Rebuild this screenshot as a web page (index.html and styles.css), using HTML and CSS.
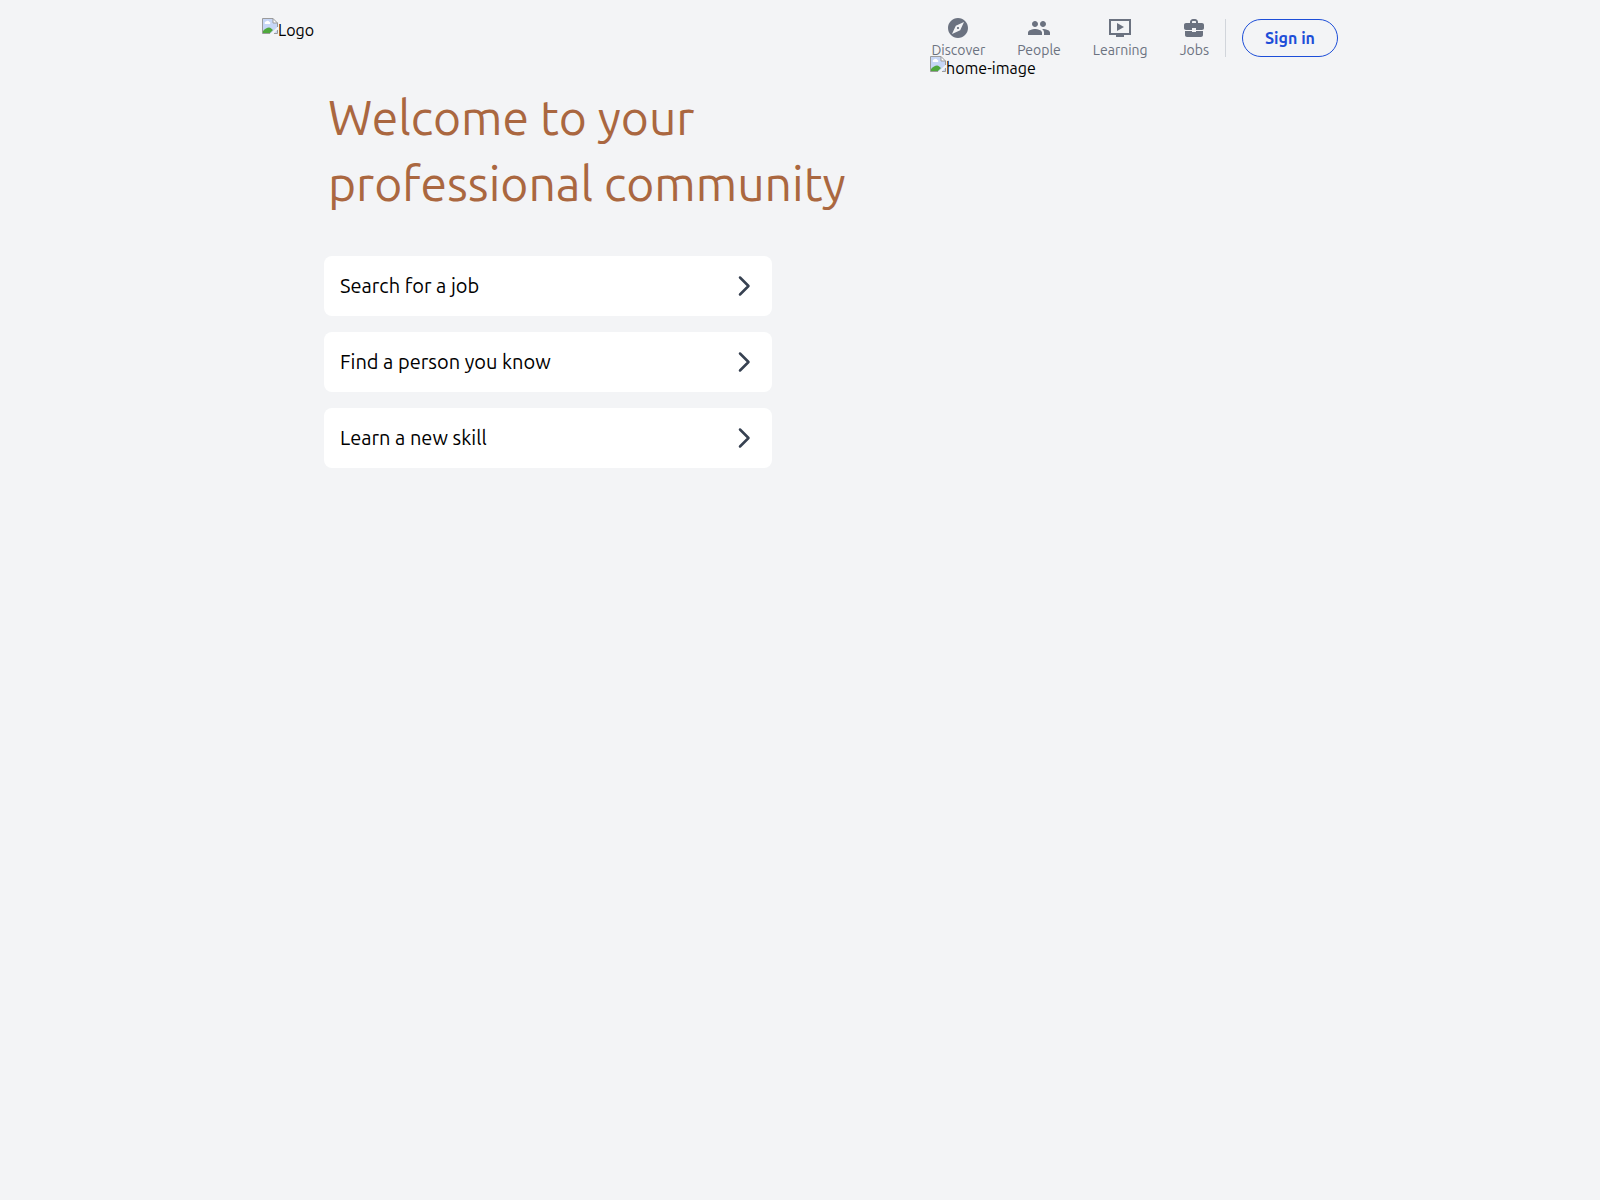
FILE: index.html
```html
<!DOCTYPE html>
<html lang="en">

<head>
    <meta charset="UTF-8">
    <meta name="viewport" content="width=device-width, initial-scale=1.0">
    <title>Welcome to your professional community</title>
    <link rel="stylesheet" href="styles.css">
</head>

<body>

    <!-- missing picture icon, used by the logo and the home image -->
    <svg class="sprite" aria-hidden="true">
        <symbol id="broken" viewBox="0 0 16 16">
            <path d="M0.5 0.5H11L15.5 5V15.5H0.5Z" fill="#c6d6f6" />
            <path d="M1 15V13C3 11 5 9.5 7 9.5C8.5 9.5 10 11 11 12L8 15Z" fill="#4fa83d" />
            <path d="M3 6a1.5 1.5 0 0 1 1-2.5a2 2 0 0 1 3.5 .5a1.2 1.2 0 0 1 .5 2Z" fill="#fff" />
            <path d="M8 16L16 8.5V11L11.5 16Z" fill="#f3f4f6" />
            <path d="M11 .5V5H15.5Z" fill="#fff" />
            <path d="M8 15.5H.5V.5H11L15.5 5V9M11 .5V5H15.5M15.5 12V15.5H12" fill="none" stroke="#9b9b9b" />
        </symbol>
    </svg>

    <div class="container">
        <header class="header">
            <a class="picture logo" href="#">
                <svg class="picture-icon" aria-hidden="true"><use href="#broken" /></svg>
                <span>Logo</span>
            </a>

            <nav class="nav">
                <a class="nav-item" href="#">
                    <svg viewBox="0 0 24 24" aria-hidden="true">
                        <path d="M12 10.9c-.61 0-1.1.49-1.1 1.1s.49 1.1 1.1 1.1c.61 0 1.1-.49 1.1-1.1s-.49-1.1-1.1-1.1zM12 2C6.48 2 2 6.48 2 12s4.48 10 10 10 10-4.48 10-10S17.52 2 12 2zm2.19 12.19L6 18l3.81-8.19L18 6l-3.81 8.19z" />
                    </svg>
                    <span>Discover</span>
                </a>
                <a class="nav-item" href="#">
                    <svg viewBox="0 0 24 24" aria-hidden="true">
                        <path d="M16 11c1.66 0 2.99-1.34 2.99-3S17.66 5 16 5c-1.66 0-3 1.34-3 3s1.34 3 3 3zm-8 0c1.66 0 2.99-1.34 2.99-3S9.66 5 8 5C6.34 5 5 6.34 5 8s1.34 3 3 3zm0 2c-2.33 0-7 1.17-7 3.5V19h14v-2.5c0-2.33-4.67-3.5-7-3.5zm8 0c-.29 0-.62.02-.97.05 1.16.84 1.97 1.97 1.97 3.45V19h6v-2.5c0-2.33-4.67-3.5-7-3.5z" />
                    </svg>
                    <span>People</span>
                </a>
                <a class="nav-item" href="#">
                    <svg viewBox="0 0 24 24" aria-hidden="true">
                        <path d="M23 3H1v16h7v2h8v-2h7V3zm-2 14H3V5h18v12zm-5-6l-7 4V7z" />
                    </svg>
                    <span>Learning</span>
                </a>
                <a class="nav-item" href="#">
                    <svg viewBox="0 0 24 24" aria-hidden="true">
                        <path d="M10 16v-1H3v4c0 1.11.89 2 2 2h14c1.11 0 2-.89 2-2v-4h-7v1h-4zm10-9h-4V6c0-1.66-1.34-3-3-3h-2C9.34 3 8 4.34 8 6v1H4c-1.1 0-2 .9-2 2v3c0 1.11.89 2 2 2h6v-2h4v2h6c1.1 0 2-.9 2-2V9c0-1.1-.9-2-2-2zm-6 0h-4V6c0-.55.45-1 1-1h2c.55 0 1 .45 1 1v1z" />
                    </svg>
                    <span>Jobs</span>
                </a>
                <div class="sign-in">
                    <button class="sign-in-btn" type="button">Sign in</button>
                </div>
            </nav>
        </header>

        <main class="hero">
            <section class="hero-text">
                <h1>Welcome to your<br>professional community</h1>
                <div class="links">
                    <a class="link-card" href="#">
                        <span>Search for a job</span>
                        <svg viewBox="0 0 32 32" aria-hidden="true"><path d="M16 7.5L24.5 16L16 24.5" /></svg>
                    </a>
                    <a class="link-card" href="#">
                        <span>Find a person you know</span>
                        <svg viewBox="0 0 32 32" aria-hidden="true"><path d="M16 7.5L24.5 16L16 24.5" /></svg>
                    </a>
                    <a class="link-card" href="#">
                        <span>Learn a new skill</span>
                        <svg viewBox="0 0 32 32" aria-hidden="true"><path d="M16 7.5L24.5 16L16 24.5" /></svg>
                    </a>
                </div>
            </section>
            <div class="picture">
                <svg class="picture-icon" aria-hidden="true"><use href="#broken" /></svg>
                <span>home-image</span>
            </div>
        </main>
    </div>

</body>

</html>
```
FILE: styles.css
```css
* {
    box-sizing: border-box;
    margin: 0;
    padding: 0;
}

body {
    min-height: 100vh;
    background: #f3f4f6;
    color: #000;
    font-family: Ubuntu, "Open Sans", "Noto Sans", sans-serif;
    font-size: 16px;
    line-height: 24px;
}

a {
    color: inherit;
    text-decoration: none;
}

.sprite {
    display: none;
}

.container {
    max-width: 1076px;
    margin: 0 auto;
}

/* header */
.header {
    display: flex;
    justify-content: space-between;
    align-items: flex-start;
    padding-top: 16px;
}

.picture {
    display: flex;
    align-items: flex-start;
}

.picture-icon {
    width: 16px;
    height: 16px;
}

.logo {
    padding: 2px 0;
}

.nav {
    display: flex;
    align-items: center;
    gap: 32px;
}

.nav-item {
    display: flex;
    flex-direction: column;
    align-items: center;
    color: #6b7280;
    font-size: 14px;
    line-height: 20px;
}

.nav-item svg {
    width: 24px;
    height: 24px;
    fill: currentColor;
}

.sign-in {
    margin-left: -16px;
    padding-left: 16px;
    border-left: 1px solid #d1d5db;
}

.sign-in-btn {
    display: block;
    width: 96px;
    height: 38px;
    border: 1px solid #1d4ed8;
    border-radius: 19px;
    background: transparent;
    color: #1d4ed8;
    font-family: inherit;
    font-size: 16px;
    font-weight: 600;
    cursor: pointer;
}

.sign-in-btn:hover {
    background: #eff6ff;
}

/* hero */
.hero {
    display: grid;
    grid-template-columns: 606px 1fr;
    margin-top: -4px;
    padding-left: 62px;
}

.hero-text {
    padding-top: 28px;
}

.hero-text h1 {
    padding-left: 4px;
    color: #aa6740;
    font-size: 48px;
    font-weight: 400;
    line-height: 66px;
}

.links {
    display: flex;
    flex-direction: column;
    gap: 16px;
    max-width: 448px;
    margin-top: 40px;
}

.link-card {
    display: flex;
    justify-content: space-between;
    align-items: center;
    height: 60px;
    padding: 0 16px;
    border-radius: 8px;
    background: #fff;
    font-size: 20px;
    line-height: 28px;
}

.link-card svg {
    width: 32px;
    height: 32px;
    fill: none;
    stroke: #374151;
    stroke-width: 2.5;
    stroke-linecap: round;
    stroke-linejoin: round;
}
```
